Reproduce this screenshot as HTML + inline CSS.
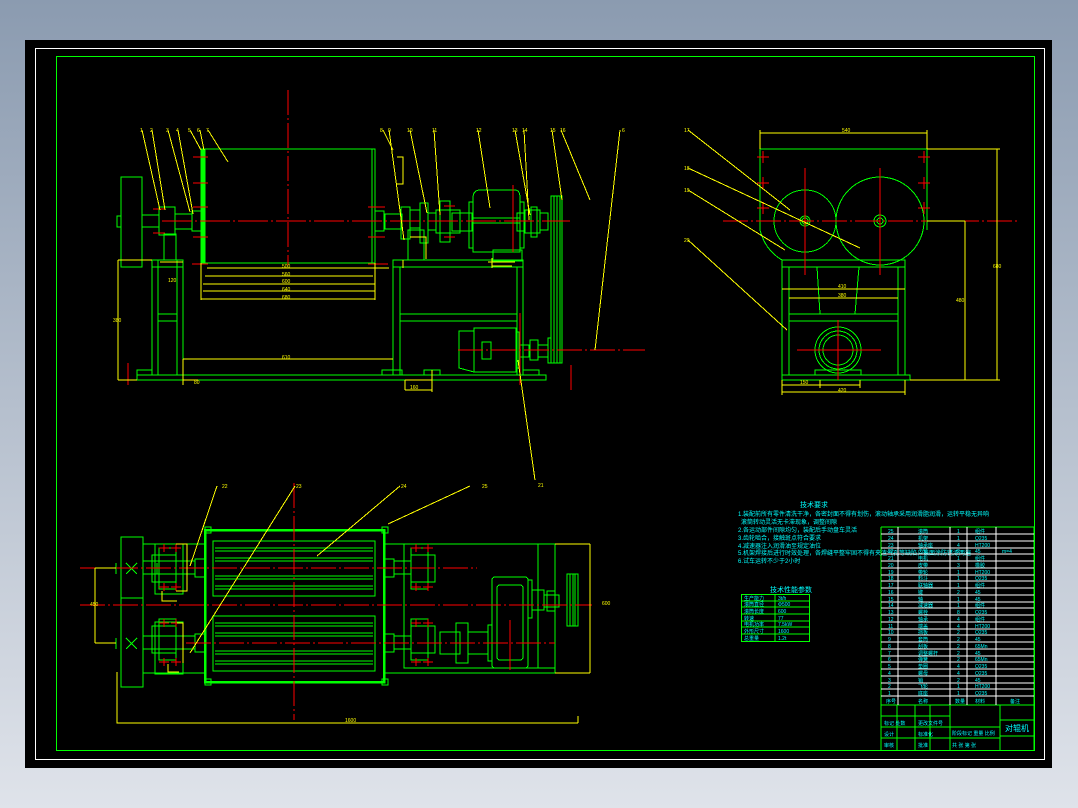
<!DOCTYPE html>
<html><head><meta charset="utf-8"><style>
html,body{margin:0;padding:0;width:1078px;height:808px;overflow:hidden;background:linear-gradient(#8b9bb0,#dfe3ea);}
svg{position:absolute;left:0;top:0}
text{font-family:"Liberation Sans","Noto Sans CJK SC",sans-serif}
</style></head><body>
<svg width="1078" height="808" viewBox="0 0 1078 808" shape-rendering="crispEdges">
<rect x="25" y="40" width="1027" height="728" fill="#000"/>
<rect x="35.5" y="48.5" width="1009" height="711" fill="none" stroke="#fff"/>
<rect x="56.5" y="56.5" width="978" height="694" fill="none" stroke="#00ff00"/>

<!-- ========== FRONT VIEW ========== -->
<g fill="none" stroke="#00ff00" stroke-width="1">
  <rect x="121" y="177" width="21" height="90"/>
  <rect x="117" y="216" width="4" height="11"/>
  <rect x="142" y="215" width="17" height="12"/>
  <rect x="159" y="207" width="16" height="28"/>
  <rect x="175" y="214" width="17" height="15"/>
  <rect x="164" y="234" width="12" height="26"/>
  <rect x="152" y="260" width="31" height="115"/>
  <line x1="158" y1="260" x2="158" y2="375"/><line x1="177" y1="260" x2="177" y2="375"/>
  <line x1="158" y1="314" x2="177" y2="314"/><line x1="158" y1="321" x2="177" y2="321"/>
  <line x1="152" y1="267" x2="183" y2="267"/>
  <rect x="201" y="149" width="174" height="114"/>
  <rect x="201" y="149" width="4" height="114" fill="#00ff00"/>
  <rect x="372" y="149" width="3" height="114"/>
  <rect x="192" y="211" width="9" height="20"/>
  <rect x="375" y="211" width="9" height="20"/>
  <rect x="385" y="214" width="17" height="15"/>
  <rect x="401" y="207" width="9" height="32"/>
  <rect x="410" y="210" width="10" height="18"/>
  <rect x="420" y="203" width="8" height="40"/>
  <rect x="408" y="230" width="16" height="30"/>
  <rect x="428" y="213" width="8" height="17"/>
  <rect x="436" y="210" width="24" height="23"/>
  <rect x="440" y="201" width="10" height="41"/>
  <rect x="452" y="213" width="20" height="18"/>
  <path d="M473 252 V198 Q473 190 480 190 H515 Q520 190 520 198 V252 Z"/>
  <rect x="469" y="202" width="4" height="46"/>
  <rect x="520" y="202" width="4" height="46"/>
  <line x1="473" y1="218" x2="520" y2="218"/><line x1="473" y1="223" x2="520" y2="223"/>
  <rect x="517" y="213" width="8" height="18"/>
  <rect x="525" y="210" width="15" height="23"/>
  <rect x="531" y="207" width="6" height="30"/>
  <rect x="540" y="213" width="8" height="17"/>
  <rect x="551" y="196" width="11" height="167"/>
  <line x1="554" y1="196" x2="554" y2="363"/><line x1="557" y1="196" x2="557" y2="363"/><line x1="560" y1="196" x2="560" y2="363"/>
  <rect x="493" y="250" width="29" height="11"/>
  <rect x="393" y="260" width="130" height="115"/>
  <line x1="393" y1="267" x2="523" y2="267"/>
  <line x1="400" y1="267" x2="400" y2="375"/><line x1="517" y1="267" x2="517" y2="375"/>
  <line x1="400" y1="314" x2="517" y2="314"/><line x1="400" y1="321" x2="517" y2="321"/>
  <path d="M474 331 H459 L459 368 L474 372 Z"/>
  <rect x="474" y="328" width="42" height="44"/>
  <rect x="482" y="342" width="9" height="17"/>
  <rect x="516" y="332" width="3" height="36"/>
  <rect x="519" y="345" width="10" height="12"/>
  <rect x="530" y="340" width="8" height="20"/>
  <rect x="538" y="345" width="10" height="12"/>
  <rect x="548" y="338" width="3" height="25"/>
  <rect x="137" y="375" width="409" height="5"/>
  <rect x="137" y="370" width="15" height="5"/><rect x="382" y="370" width="20" height="5"/><rect x="424" y="370" width="16" height="5"/><rect x="523" y="370" width="16" height="5"/>
</g>
<g stroke="#ff0000" stroke-width="1" fill="none">
  <line x1="162" y1="221" x2="570" y2="221" stroke-dasharray="30 3 2 3"/>
  <line x1="288" y1="90" x2="288" y2="265" stroke-dasharray="25 3 2 3"/>
  <line x1="458" y1="350" x2="645" y2="350" stroke-dasharray="25 3 2 3"/>
  <line x1="513" y1="185" x2="513" y2="252"/>
  <line x1="520" y1="313" x2="520" y2="385"/>
  <line x1="193" y1="157" x2="208" y2="157"/><line x1="193" y1="183" x2="208" y2="183"/><line x1="193" y1="207" x2="208" y2="207"/><line x1="193" y1="237" x2="208" y2="237"/><line x1="192" y1="264" x2="208" y2="264"/>
  <line x1="368" y1="207" x2="385" y2="207"/><line x1="368" y1="237" x2="385" y2="237"/><line x1="368" y1="264" x2="388" y2="264"/>
  <line x1="153" y1="209" x2="165" y2="209"/><line x1="153" y1="233" x2="165" y2="233"/>
  <line x1="444" y1="206" x2="455" y2="206"/><line x1="444" y1="237" x2="455" y2="237"/>
  <line x1="128" y1="363" x2="128" y2="385"/><line x1="571" y1="365" x2="571" y2="390"/>
</g>
<g stroke="#ffff00" stroke-width="1" fill="none">
  <line x1="207" y1="268" x2="389" y2="268"/><line x1="205" y1="276" x2="373" y2="276"/><line x1="203" y1="284" x2="375" y2="284"/><line x1="203" y1="291" x2="375" y2="291"/><line x1="201" y1="299" x2="375" y2="299"/>
  <line x1="201" y1="263" x2="201" y2="300"/><line x1="375" y1="263" x2="375" y2="300"/>
  <line x1="183" y1="359" x2="393" y2="359"/><line x1="183" y1="359" x2="183" y2="385"/><line x1="118" y1="260" x2="118" y2="380"/><line x1="118" y1="380" x2="137" y2="380"/><line x1="118" y1="260" x2="152" y2="260"/>
  <line x1="405" y1="380" x2="432" y2="380"/><line x1="405" y1="380" x2="405" y2="390"/><line x1="432" y1="370" x2="432" y2="392"/><line x1="405" y1="390" x2="432" y2="390"/>
  <line x1="183" y1="380" x2="198" y2="380"/>
  <path d="M397 157 H403 V184 H397 M410 237 H426 V259 M403 260 V268"/>
  <line x1="160" y1="262" x2="183" y2="262"/>
  <path d="M142 130 L160 210 M152 130 L165 210 M168 130 L190 212 M178 130 L193 214 M190 130 L201 150 M200 130 L204 150 M208 130 L228 162 M383 130 L393 150 M389 130 L404 240 M410 130 L427 213 M434 130 L440 215 M478 130 L490 208 M515 130 L530 215 M524 130 L529 220 M552 130 L562 200 M561 130 L590 200 M620 130 L595 350 M535 480 L518 360"/>
  <path d="M488 262 H515 M492 266 H512 M492 258 V268"/>
</g>
<g fill="#ffff00" font-size="5">
  <text x="140" y="132">1</text><text x="150" y="132">2</text><text x="166" y="132">3</text><text x="176" y="132">4</text><text x="188" y="132">5</text><text x="197" y="132">6</text><text x="206" y="132">7</text><text x="380" y="132">8</text><text x="388" y="132">9</text><text x="407" y="132">10</text><text x="432" y="132">11</text><text x="476" y="132">12</text><text x="512" y="132">13</text><text x="522" y="132">14</text><text x="550" y="132">15</text><text x="560" y="132">16</text><text x="622" y="132">6</text><text x="538" y="487">21</text>
  <text x="282" y="268">500</text><text x="282" y="276">560</text><text x="282" y="283">600</text><text x="282" y="291">640</text><text x="282" y="299">680</text><text x="282" y="359">610</text><text x="113" y="322">380</text><text x="168" y="282">120</text><text x="194" y="384">80</text><text x="410" y="389">160</text>
</g>

<!-- ========== SIDE VIEW ========== -->
<g fill="none" stroke="#00ff00">
  <path d="M760 230 V149 H927 V230"/>
  <circle cx="805" cy="221" r="31"/>
  <circle cx="880" cy="221" r="44"/>
  <circle cx="805" cy="221" r="5"/><circle cx="805" cy="221" r="3"/>
  <circle cx="880" cy="221" r="6"/><circle cx="880" cy="221" r="3"/>
  <path d="M760 230 Q765 250 782 260"/>
  <rect x="782" y="260" width="123" height="115"/>
  <line x1="782" y1="267" x2="905" y2="267"/>
  <line x1="789" y1="267" x2="789" y2="375"/><line x1="898" y1="267" x2="898" y2="375"/>
  <line x1="789" y1="314" x2="898" y2="314"/><line x1="789" y1="321" x2="898" y2="321"/>
  <path d="M817 267 L820 314 M859 267 L855 314"/>
  <rect x="782" y="375" width="128" height="5"/>
  <circle cx="838" cy="350" r="23"/><circle cx="838" cy="350" r="19"/><circle cx="838" cy="350" r="15"/>
  <rect x="815" y="370" width="46" height="5"/>
</g>
<g stroke="#ff0000" fill="none">
  <line x1="723" y1="221" x2="1020" y2="221" stroke-dasharray="25 3 2 3"/>
  <line x1="805" y1="168" x2="805" y2="275"/><line x1="880" y1="168" x2="880" y2="275"/>
  <line x1="797" y1="350" x2="881" y2="350"/><line x1="838" y1="320" x2="838" y2="380"/>
  <path d="M757 157 H769 M763 151 V163 M757 183 H769 M763 177 V189 M757 208 H769 M763 202 V214 M918 157 H930 M924 151 V163 M918 183 H930 M924 177 V189 M918 208 H930 M924 202 V214"/>
</g>
<g stroke="#ffff00" fill="none">
  <path d="M760 133 H927 M760 130 V149 M927 130 V149 M927 149 H1000 M997 149 V380 M910 380 H1000 M965 221 V380 M927 221 H965"/>
  <path d="M782 289 H905 M789 298 H898 M782 385 H860 M782 392 H905 M782 380 V395 M905 380 V395 M820 380 V388 M860 380 V388"/>
  <path d="M688 130 L790 210 M688 168 L860 248 M688 190 L785 250 M688 240 L787 330"/>
</g>
<g fill="#ffff00" font-size="5">
  <text x="842" y="132">540</text><text x="993" y="268">680</text><text x="956" y="302">480</text><text x="684" y="132">17</text><text x="684" y="170">18</text><text x="684" y="192">19</text><text x="684" y="242">20</text><text x="838" y="288">410</text><text x="838" y="297">380</text><text x="800" y="384">150</text><text x="838" y="392">420</text>
</g>

<!-- ========== PLAN VIEW ========== -->
<g fill="none" stroke="#00ff00">
  <rect x="121" y="537" width="22" height="150"/>
  <line x1="121" y1="598" x2="143" y2="598"/>
  <path d="M116 563 V574 M157 563 V574 M116 638 V649"/>
  <path d="M126 563 L137 574 M137 563 L126 574 M126 638 L137 649 M137 638 L126 649"/>
  <path d="M143 544 H205 M143 673 H205 M384 544 H590 M384 673 H555"/>
  <rect x="159" y="548" width="17" height="41"/><rect x="152" y="555" width="24" height="27"/>
  <rect x="159" y="619" width="17" height="41"/><rect x="152" y="626" width="24" height="27"/>
  <rect x="155" y="544" width="28" height="50"/><rect x="155" y="622" width="28" height="52"/>
  <rect x="195" y="559" width="10" height="18"/><rect x="195" y="634" width="10" height="18"/>
  <rect x="143" y="561" width="52" height="13"/><rect x="143" y="636" width="52" height="13"/>
  <rect x="205" y="530" width="179" height="152" stroke-width="2.5"/>
  <rect x="213" y="541" width="162" height="55"/>
  <rect x="213" y="616" width="162" height="55"/>
  <path d="M215 548 H373 M215 551 H373 M215 558 H373 M215 561 H373 M215 576 H373 M215 579 H373 M215 586 H373 M215 589 H373"/>
  <path d="M215 623 H373 M215 626 H373 M215 633 H373 M215 636 H373 M215 651 H373 M215 654 H373 M215 661 H373 M215 664 H373"/>
  <rect x="384" y="559" width="10" height="18"/><rect x="384" y="634" width="10" height="18"/>
  <rect x="411" y="548" width="17" height="41"/><rect x="411" y="555" width="24" height="27"/>
  <rect x="411" y="619" width="17" height="41"/><rect x="411" y="626" width="24" height="27"/>
  <path d="M404 544 V668 H555"/>
  <rect x="394" y="561" width="17" height="13"/><rect x="394" y="636" width="17" height="13"/>
  <rect x="440" y="632" width="20" height="22"/><rect x="456" y="623" width="12" height="40"/><rect x="468" y="632" width="20" height="22"/><rect x="488" y="625" width="4" height="36"/>
  <rect x="492" y="577" width="36" height="91" rx="3"/><rect x="497" y="585" width="26" height="75" rx="3"/>
  <rect x="528" y="580" width="4" height="38"/><rect x="532" y="590" width="12" height="20"/>
  <rect x="544" y="595" width="15" height="12"/><rect x="547" y="591" width="8" height="20"/>
  <rect x="567" y="574" width="11" height="52"/>
  <path d="M570 574 V626 M573 574 V626 M575 574 V626"/>
  <line x1="555" y1="544" x2="555" y2="673"/><line x1="538" y1="544" x2="538" y2="668"/>
  <path d="M205 527 h6 v6 h-6z M382 527 h6 v6 h-6z M205 679 h6 v6 h-6z M382 679 h6 v6 h-6z"/>
</g>
<g stroke="#ff0000" fill="none">
  <line x1="80" y1="568" x2="477" y2="568" stroke-dasharray="25 3 2 3"/>
  <line x1="80" y1="605" x2="592" y2="605" stroke-dasharray="25 3 2 3"/>
  <line x1="186" y1="643" x2="555" y2="643" stroke-dasharray="25 3 2 3"/>
  <line x1="294" y1="483" x2="294" y2="720" stroke-dasharray="25 3 2 3"/>
  <line x1="510" y1="620" x2="510" y2="670"/>
  <path d="M159 548 h10 M164 544 v8 M171 548 h10 M176 544 v8 M159 587 h10 M164 583 v8 M171 587 h10 M176 583 v8 M159 623 h10 M164 619 v8 M171 623 h10 M176 619 v8 M159 662 h10 M164 658 v8 M171 662 h10 M176 658 v8"/>
  <path d="M411 548 h10 M416 544 v8 M423 548 h10 M428 544 v8 M411 587 h10 M416 583 v8 M423 587 h10 M428 583 v8 M411 623 h10 M416 619 v8 M423 623 h10 M428 619 v8 M411 662 h10 M416 658 v8 M423 662 h10 M428 658 v8"/>
</g>
<g stroke="#ffff00" fill="none">
  <path d="M117 672 V723 H578 M578 723 V716 M95 568 H116 M95 643 H116 M95 568 V643 M555 544 H590 M590 544 V673 M555 673 H590"/>
  <path d="M176 544 H187 V591 H176 M177 623 H183 V663 M162 591 V601 H177 M168 664 V672 H179"/>
  <path d="M217 486 L190 566 M295 486 L190 653 M400 486 L317 556 M470 486 L388 524"/>
</g>
<g fill="#ffff00" font-size="5">
  <text x="222" y="488">22</text><text x="296" y="488">23</text><text x="401" y="488">24</text><text x="482" y="488">25</text><text x="345" y="722">1600</text><text x="90" y="606">450</text><text x="602" y="605">600</text>
</g>

<!-- ========== TECH REQUIREMENTS ========== -->
<g fill="#00ffff" font-size="6">
  <text x="800" y="507" font-size="7">技术要求</text>
  <text x="738" y="516">1.装配前所有零件清洗干净，各密封面不得有划伤，滚动轴承采用润滑脂润滑，运转平稳无异响</text>
  <text x="741" y="524">滚筒转动灵活无卡滞现象，调整间隙</text>
  <text x="738" y="532">2.各运动部件间隙均匀，装配后手动盘车灵活</text>
  <text x="738" y="540">3.齿轮啮合，接触斑点符合要求</text>
  <text x="738" y="548">4.减速器注入润滑油至规定油位</text>
  <text x="738" y="555">5.机架焊接后进行时效处理，各焊缝平整牢固不得有夹渣气孔等缺陷，表面涂防锈漆两遍</text>
  <text x="738" y="563">6.试车运转不少于2小时</text>
  <text x="770" y="592" font-size="7">技术性能参数</text>
</g>
<g stroke="#00ff00" fill="none">
  <rect x="741.5" y="594.5" width="68" height="47"/>
  <path d="M741 601 H810 M741 607 H810 M741 614 H810 M741 621 H810 M741 627 H810 M741 634 H810 M775 594 V641"/>
</g>
<g fill="#00ffff" font-size="5">
  <text x="744" y="600">生产能力</text><text x="778" y="600">3t/h</text>
  <text x="744" y="606">滚筒直径</text><text x="778" y="606">Φ500</text>
  <text x="744" y="613">滚筒长度</text><text x="778" y="613">600</text>
  <text x="744" y="620">转速</text><text x="778" y="620">77</text>
  <text x="744" y="626">电机功率</text><text x="778" y="626">7.5kW</text>
  <text x="744" y="633">外形尺寸</text><text x="778" y="633">1600</text>
  <text x="744" y="640">总重量</text><text x="778" y="640">1.2t</text>
</g>

<!-- ========== PARTS LIST ========== -->
<g stroke="#00ff00" fill="none">
  <path d="M881 527 H1034 M881 527 V750 M881 705 H1034 M1034 527 V750"/>
  <path d="M950 705 V750 M1000 705 V750 M1000 720 H1034 M1000 736 H1034 M950 727 H1000 M950 738 H1000 M881 716 H950 M881 727 H950 M881 738 H950 M897 705 V750 M915 705 V750 M930 705 V750"/>
</g>
<g stroke="#ffffff" fill="none" stroke-width="1">
  <path d="M898 527 V705 M950 527 V705 M967 527 V705 M996 527 V705"/>
  <path d="M881 534 H1034 M881 541 H1034 M881 548 H1034 M881 554 H1034 M881 561 H1034 M881 568 H1034 M881 575 H1034 M881 581 H1034 M881 588 H1034 M881 595 H1034 M881 602 H1034 M881 608 H1034 M881 615 H1034 M881 622 H1034 M881 629 H1034 M881 635 H1034 M881 642 H1034 M881 649 H1034 M881 656 H1034 M881 662 H1034 M881 669 H1034 M881 676 H1034 M881 683 H1034 M881 689 H1034 M881 696 H1034"/>
</g>
<g fill="#00ffff" font-size="5">
  <text x="888" y="533">25</text><text x="918" y="533">滚筒</text><text x="957" y="533">1</text><text x="975" y="533">组件</text>
  <text x="888" y="540">24</text><text x="918" y="540">机架</text><text x="957" y="540">1</text><text x="975" y="540">Q235</text>
  <text x="888" y="547">23</text><text x="918" y="547">轴承座</text><text x="957" y="547">4</text><text x="975" y="547">HT200</text>
  <text x="888" y="553">22</text><text x="918" y="553">齿轮</text><text x="957" y="553">2</text><text x="975" y="553">45</text><text x="1002" y="553">m=4</text>
  <text x="888" y="560">21</text><text x="918" y="560">电机</text><text x="957" y="560">1</text><text x="975" y="560">组件</text>
  <text x="888" y="567">20</text><text x="918" y="567">皮带</text><text x="957" y="567">3</text><text x="975" y="567">橡胶</text>
  <text x="888" y="574">19</text><text x="918" y="574">带轮</text><text x="957" y="574">1</text><text x="975" y="574">HT200</text>
  <text x="888" y="580">18</text><text x="918" y="580">料斗</text><text x="957" y="580">1</text><text x="975" y="580">Q235</text>
  <text x="888" y="587">17</text><text x="918" y="587">联轴器</text><text x="957" y="587">1</text><text x="975" y="587">组件</text>
  <text x="888" y="594">16</text><text x="918" y="594">键</text><text x="957" y="594">2</text><text x="975" y="594">45</text>
  <text x="888" y="601">15</text><text x="918" y="601">轴</text><text x="957" y="601">1</text><text x="975" y="601">45</text>
  <text x="888" y="607">14</text><text x="918" y="607">减速器</text><text x="957" y="607">1</text><text x="975" y="607">组件</text>
  <text x="888" y="614">13</text><text x="918" y="614">螺栓</text><text x="957" y="614">8</text><text x="975" y="614">Q235</text>
  <text x="888" y="621">12</text><text x="918" y="621">轴承</text><text x="957" y="621">4</text><text x="975" y="621">组件</text>
  <text x="888" y="628">11</text><text x="918" y="628">端盖</text><text x="957" y="628">4</text><text x="975" y="628">HT200</text>
  <text x="888" y="634">10</text><text x="918" y="634">挡板</text><text x="957" y="634">2</text><text x="975" y="634">Q235</text>
  <text x="888" y="641">9</text><text x="918" y="641">套筒</text><text x="957" y="641">2</text><text x="975" y="641">45</text>
  <text x="888" y="648">8</text><text x="918" y="648">刮板</text><text x="957" y="648">2</text><text x="975" y="648">65Mn</text>
  <text x="888" y="655">7</text><text x="918" y="655">调整螺杆</text><text x="957" y="655">2</text><text x="975" y="655">45</text>
  <text x="888" y="661">6</text><text x="918" y="661">弹簧</text><text x="957" y="661">2</text><text x="975" y="661">65Mn</text>
  <text x="888" y="668">5</text><text x="918" y="668">垫圈</text><text x="957" y="668">4</text><text x="975" y="668">Q235</text>
  <text x="888" y="675">4</text><text x="918" y="675">螺母</text><text x="957" y="675">4</text><text x="975" y="675">Q235</text>
  <text x="888" y="682">3</text><text x="918" y="682">销</text><text x="957" y="682">2</text><text x="975" y="682">45</text>
  <text x="888" y="688">2</text><text x="918" y="688">飞轮</text><text x="957" y="688">1</text><text x="975" y="688">HT200</text>
  <text x="888" y="695">1</text><text x="918" y="695">底座</text><text x="957" y="695">1</text><text x="975" y="695">Q235</text>
  <text x="886" y="703">序号</text><text x="918" y="703">名称</text><text x="955" y="703">数量</text><text x="975" y="703">材料</text><text x="1010" y="703">备注</text>
  <text x="884" y="725">标记 处数</text><text x="918" y="725">更改文件号</text>
  <text x="884" y="736">设计</text><text x="918" y="736">标准化</text>
  <text x="884" y="747">审核</text><text x="918" y="747">批准</text>
  <text x="952" y="735">阶段标记 重量 比例</text><text x="952" y="747">共 张 第 张</text>
  <text x="1005" y="731" font-size="8">对辊机</text>
</g>
</svg>
</body></html>
